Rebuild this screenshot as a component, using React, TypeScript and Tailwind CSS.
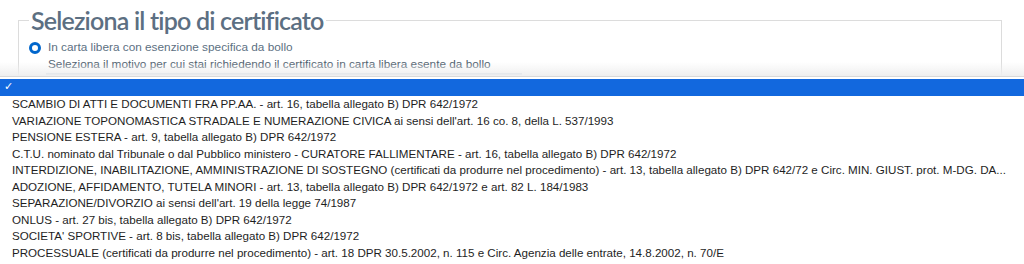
const MOTIVI = [
  "SCAMBIO DI ATTI E DOCUMENTI FRA PP.AA. - art. 16, tabella allegato B) DPR 642/1972",
  "VARIAZIONE TOPONOMASTICA STRADALE E NUMERAZIONE CIVICA ai sensi dell'art. 16 co. 8, della L. 537/1993",
  "PENSIONE ESTERA - art. 9, tabella allegato B) DPR 642/1972",
  "C.T.U. nominato dal Tribunale o dal Pubblico ministero - CURATORE FALLIMENTARE - art. 16, tabella allegato B) DPR 642/1972",
  "INTERDIZIONE, INABILITAZIONE, AMMINISTRAZIONE DI SOSTEGNO (certificati da produrre nel procedimento) - art. 13, tabella allegato B) DPR 642/72 e Circ. MIN. GIUST. prot. M-DG. DA...",
  "ADOZIONE, AFFIDAMENTO, TUTELA MINORI - art. 13, tabella allegato B) DPR 642/1972 e art. 82 L. 184/1983",
  "SEPARAZIONE/DIVORZIO ai sensi dell'art. 19 della legge 74/1987",
  "ONLUS - art. 27 bis, tabella allegato B) DPR 642/1972",
  "SOCIETA' SPORTIVE - art. 8 bis, tabella allegato B) DPR 642/1972",
  "PROCESSUALE (certificati da produrre nel procedimento) - art. 18 DPR 30.5.2002, n. 115 e Circ. Agenzia delle entrate, 14.8.2002, n. 70/E",
];

export default function App() {
  return (
    <div className="relative w-[1024px] h-[264px] overflow-hidden bg-white font-['Lato',sans-serif]">
      <fieldset className="ml-[18px] mr-[22px] mt-[6px] border border-[#dcdcdc] px-[10px] pb-6 min-w-0">
        <legend className="px-[2px] text-[25px] leading-[28px] font-semibold tracking-[-0.8px] text-[#5c6f82]">
          Seleziona il tipo di certificato
        </legend>
        <div className="flex items-center gap-[7px] h-[16px] mt-[6px] font-['Liberation_Sans',sans-serif]">
          <span className="w-[12px] h-[12px] rounded-full border-[3px] border-[#0066cc] bg-white" />
          <span className="text-[11.8px] text-[#5c6f82]">
            In carta libera con esenzione specifica da bollo
          </span>
        </div>
        <div className="ml-[17px] w-[476px] border-b-2 border-[#b8c8d8] pl-[2px] pb-[1px] text-[11.8px] leading-[16px] text-[#4a5a6a] font-['Liberation_Sans',sans-serif]">
          Seleziona il motivo per cui stai richiedendo il certificato in carta libera esente da bollo
        </div>
      </fieldset>

      {/* native select popup */}
      <div className="absolute left-0 right-0 top-[62px] h-[14px] bg-gradient-to-b from-transparent to-[#efefef]" />
      <div className="absolute left-0 right-0 top-[76px] bottom-0 border-t border-[#d9d9d9] bg-white pt-[2px] font-['Liberation_Sans',sans-serif] text-[11.6px] text-[#1e1e1e]">
        <div className="h-[17px] bg-[#1268de] flex items-center pl-[4px] text-white text-[11px] font-['DejaVu_Sans',sans-serif]">
          ✓
        </div>
        {MOTIVI.map((m) => (
          <div key={m} className="h-[16.5px] leading-[16.5px] pl-[12px] whitespace-nowrap">
            {m}
          </div>
        ))}
      </div>
    </div>
  );
}
